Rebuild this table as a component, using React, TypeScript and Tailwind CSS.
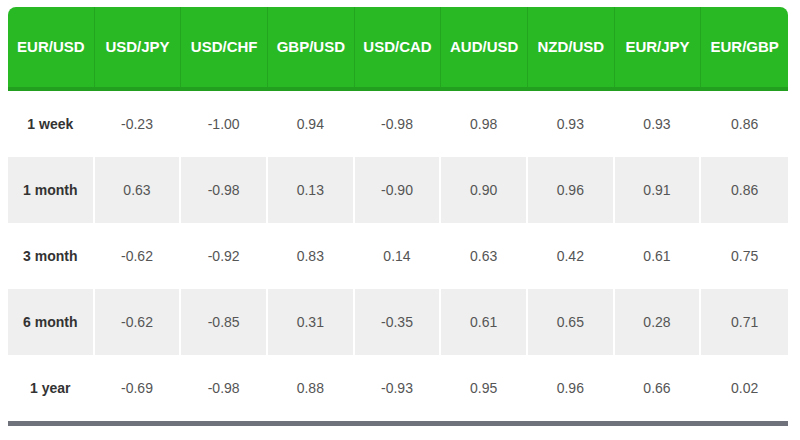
const pairs = ["EUR/USD", "USD/JPY", "USD/CHF", "GBP/USD", "USD/CAD", "AUD/USD", "NZD/USD", "EUR/JPY", "EUR/GBP"];

const rows: { label: string; values: string[] }[] = [
  { label: "1 week", values: ["-0.23", "-1.00", "0.94", "-0.98", "0.98", "0.93", "0.93", "0.86"] },
  { label: "1 month", values: ["0.63", "-0.98", "0.13", "-0.90", "0.90", "0.96", "0.91", "0.86"] },
  { label: "3 month", values: ["-0.62", "-0.92", "0.83", "0.14", "0.63", "0.42", "0.61", "0.75"] },
  { label: "6 month", values: ["-0.62", "-0.85", "0.31", "-0.35", "0.61", "0.65", "0.28", "0.71"] },
  { label: "1 year", values: ["-0.69", "-0.98", "0.88", "-0.93", "0.95", "0.96", "0.66", "0.02"] },
];

export default function App() {
  return (
    <div className="min-h-[440px] w-[800px] bg-white pl-2 pt-[7px]" style={{ fontFamily: '"Liberation Sans", Arial, sans-serif' }}>
      <div className="w-[780px] border-b-[5px] border-[#6f727a]">
        <div className="grid h-[84px] grid-cols-9 rounded-t-lg border-b-4 border-[#239f1f] bg-[#29b925]">
          {pairs.map((p, i) => (
            <div
              key={p}
              className={
                "flex items-center justify-center text-[15px] font-bold text-white " +
                (i < pairs.length - 1 ? "border-r border-[#23a520]" : "")
              }
            >
              {p}
            </div>
          ))}
        </div>
        {rows.map((row, r) => (
          <div key={row.label} className="grid h-[66px] grid-cols-9">
            {[row.label, ...row.values].map((v, i) => (
              <div
                key={i}
                className={
                  "flex items-center justify-center text-[14px] " +
                  (r % 2 === 1 ? "bg-[#efefef] " : "bg-white ") +
                  (i < 8 ? "border-r-2 border-white " : "") +
                  (i === 0 ? "font-bold text-[#333]" : "text-[#555]")
                }
              >
                {v}
              </div>
            ))}
          </div>
        ))}
      </div>
    </div>
  );
}
